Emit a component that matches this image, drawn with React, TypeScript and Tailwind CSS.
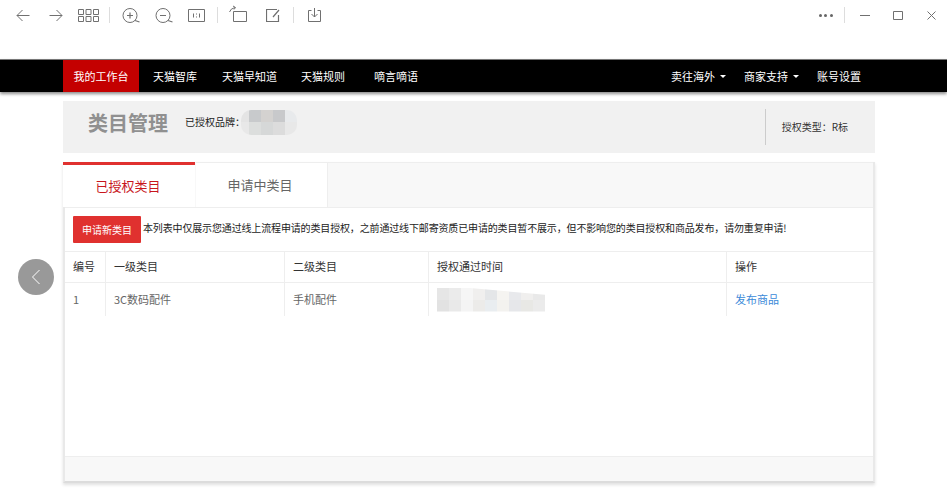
import React from 'react'

const font = "font-['Microsoft_YaHei','Noto_Sans_CJK_SC',sans-serif]"

// blurred-out values in the reference, drawn as mosaic tiles
const brandTop = ['w-[8px] bg-[#e4e4e4]', 'w-[12px] bg-[#c8cacc]', 'w-[12px] bg-[#d4d2d0]', 'w-[12px] bg-[#c8c9cb]', 'w-[12px] bg-[#e8eaec]']
const brandLow = ['w-[8px] bg-[#e8e8e8]', 'w-[12px] bg-[#dcdedd]', 'w-[12px] bg-[#d6d8d8]', 'w-[12px] bg-[#dcdcdc]', 'w-[12px] bg-[#e8e8e8]']
const timeTop = ['bg-[#e6e6e6]', 'bg-[#ebebeb]', 'bg-[#f6f6f6]', 'bg-[#f0efee]', 'bg-[#e4e6e8]', 'bg-[#f5f4f1]', 'bg-[#e8e9ec]', 'bg-[#f0efee]', 'bg-[#e9e9e9]']
const timeLow = ['bg-[#e2e2e2]', 'bg-[#e9e9e9]', 'bg-[#f4f4f4]', 'bg-[#ecebe9]', 'bg-[#e9edf0]', 'bg-[#f3f2ef]', 'bg-[#e6e7ea]', 'bg-[#e8e8e5]', 'bg-[#ebebeb]']

function Icon({ w, className, children }: { w: number; className?: string; children: React.ReactNode }) {
  return (
    <svg width={w} height={20} viewBox={`0 0 ${w} 20`} fill="none" stroke="#707070" strokeWidth="1" className={className}>
      {children}
    </svg>
  )
}

function Sep({ className }: { className: string }) {
  return <div className={`w-px h-4 bg-[#ddd] ${className}`} />
}

function Toolbar() {
  return (
    <div className="flex items-center h-[30px]">
      <Icon w={14} className="ml-[16px]"><path d="M13.500 10.500H1M6.500 5l-5.500 5.500 5.500 5.500" /></Icon>
      <Icon w={14} className="ml-[19px]"><path d="M0.500 10.500H13M7.500 5l5.500 5.500-5.500 5.500" /></Icon>
      <Icon w={21} className="ml-[15px]">
        <path d="M0.500 4.500h5v5h-5zM8 4.500h5v5H8zM15.500 4.500h5v5h-5zM0.500 11.500h5v5h-5zM8 11.500h5v5H8zM15.500 11.500h5v5h-5z" />
      </Icon>
      <Sep className="ml-[10px]" />
      <Icon w={18} className="ml-[12px]">
        <circle cx="8" cy="10.500" r="7" /><path d="M13 15.500l4.500 1.500M5 10.500h6M8 7.500v6" strokeWidth="1.200" />
      </Icon>
      <Icon w={18} className="ml-[15px]">
        <circle cx="8" cy="10.500" r="7" /><path d="M13 15.500l4.500 1.500M5 10.500h6" strokeWidth="1.200" />
      </Icon>
      <Icon w={17} className="ml-[15px]">
        <path d="M0.500 4.500h16v12h-16zM5.500 8.500v4M8.500 8.500v1M8.500 11.500v1M11.500 8.500v4" />
      </Icon>
      <Sep className="ml-[12px]" />
      <Icon w={19} className="ml-[11px]">
        <path d="M4.500 6.500h13v10h-13zM0.500 7Q1.500 3.500 6 2.500M4 1l2.500 1.500L5 4.500" />
      </Icon>
      <Icon w={14} className="ml-[18px]">
        <path d="M11 4.500H0.500v12h12V10M7 12l6-7" strokeWidth="1.200" />
      </Icon>
      <Sep className="ml-[13px]" />
      <Icon w={13} className="ml-[14px]">
        <path d="M3.500 5.500h-3v11h12v-11h-3M6.500 3v9M3.500 9l3 3 3-3" />
      </Icon>
      <div className="ml-auto flex items-center gap-[2.500px] mr-[11.500px]">
        <span className="w-[3px] h-[3px] rounded-full bg-[#666]" />
        <span className="w-[3px] h-[3px] rounded-full bg-[#666]" />
        <span className="w-[3px] h-[3px] rounded-full bg-[#666]" />
      </div>
      <Sep className="mr-[15px]" />
      <Icon w={10} className="mr-[23px]"><path d="M0 10.500h10" /></Icon>
      <Icon w={10} className="mr-[24px]"><path d="M0.500 6.500h9v8h-9z" /></Icon>
      <Icon w={9} className="mr-[11px]"><path d="M0.500 6.500l8 8M8.500 6.500l-8 8" /></Icon>
    </div>
  )
}

function Caret({ className }: { className: string }) {
  return <span className={`w-0 h-0 border-x-[3px] border-x-transparent border-t-[3px] border-t-white ${className}`} />
}

function Nav() {
  return (
    <div className="mt-[29px] h-[33px] bg-black border-t border-[#777] shadow-[0_2px_3px_rgba(0,0,0,0.45)] flex pl-[63px] text-[11px] text-white">
      <a className="w-[76px] bg-[#c40000] flex items-center justify-center">我的工作台</a>
      <a className="ml-[14px] flex items-center">天猫智库</a>
      <a className="ml-[25px] flex items-center">天猫早知道</a>
      <a className="ml-[24px] flex items-center">天猫规则</a>
      <a className="ml-[29px] flex items-center">嘀言嘀语</a>
      <a className="ml-auto flex items-center">卖往海外<Caret className="ml-[5px]" /></a>
      <a className="ml-[18px] flex items-center">商家支持<Caret className="ml-[5px]" /></a>
      <a className="ml-[18px] mr-[86px] flex items-center">账号设置</a>
    </div>
  )
}

function BrandPanel() {
  return (
    <div className="mt-[9px] h-[52px] bg-[#f1f1f1] flex items-start">
      <h2 className="ml-[25px] mt-[9px] text-[20px] leading-[26px] font-bold text-[#909090]">类目管理</h2>
      <span className="ml-[17px] mt-[14px] text-[10px] leading-[14px] text-[#222]">已授权品牌：</span>
      <div className="-ml-[4px] mt-[9px] h-[25px] rounded-[10px] overflow-hidden">
        <div className="flex h-[12px]">{brandTop.map((c, i) => <div key={i} className={c} />)}</div>
        <div className="flex h-[13px]">{brandLow.map((c, i) => <div key={i} className={c} />)}</div>
      </div>
      <div className="ml-auto mt-[8px] w-px h-[36px] bg-[#ccc]" />
      <span className="ml-[16px] mr-[27px] mt-[19px] text-[10px] leading-[14px] text-[#333]">授权类型：R标</span>
    </div>
  )
}

const cols = ['w-[41px]', 'w-[179px]', 'w-[144px]', 'w-[298px]', 'flex-1']

function Cell({ i, className, children }: { i: number; className?: string; children?: React.ReactNode }) {
  return (
    <div className={`${cols[i]} ${i < 4 ? 'border-r border-[#eee]' : ''} flex items-center pl-[8px] ${className ?? ''}`}>
      {children}
    </div>
  )
}

function Table() {
  return (
    <div className="text-[11px]">
      <div className="flex h-[32px] border-y border-[#eee] text-[#333]">
        {['编号', '一级类目', '二级类目', '授权通过时间', '操作'].map((t, i) => <Cell key={t} i={i} className="pb-[2px]">{t}</Cell>)}
      </div>
      <div className="flex h-[33px] text-[#666]">
        <Cell i={0}>1</Cell>
        <Cell i={1}>3C数码配件</Cell>
        <Cell i={2}>手机配件</Cell>
        <Cell i={3}>
          <div className="w-[108px] h-[24px] overflow-hidden [clip-path:polygon(0_0,25%_0,100%_30%,100%_100%,0_100%)]">
            <div className="flex h-[12px]">{timeTop.map((c, i) => <div key={i} className={`flex-1 ${c}`} />)}</div>
            <div className="flex h-[12px]">{timeLow.map((c, i) => <div key={i} className={`flex-1 ${c}`} />)}</div>
          </div>
        </Cell>
        <Cell i={4}><a className="text-[#3b8ad9]">发布商品</a></Cell>
      </div>
    </div>
  )
}

function CategoryPanel() {
  return (
    <div className="mt-[9px] h-[321px] border-x-2 border-b-2 border-x-[#e9e9e9] border-b-[#dcdcdc] bg-[#f8f8f8] shadow-[0_2px_3px_rgba(0,0,0,0.12)] flex flex-col">
      <div className="flex h-[45px] text-[13px]">
        <div className="-ml-[2px] w-[132px] pr-[2px] border-t-[3px] border-[#e0312f] bg-white text-[#c8161d] flex items-center justify-center">已授权类目</div>
        <div className="ml-px w-[132px] pr-[3px] border-t border-r border-[#eee] bg-white text-[#666] flex items-center justify-center">申请中类目</div>
        <div className="flex-1 border-t border-[#eee]" />
      </div>
      <div className="flex-1 bg-white border-t border-[#eee]">
        <div className="h-[43px] flex items-start text-[10px]">
          <button className="ml-[8px] mt-[8px] w-[68px] h-[27px] bg-[#e0312f] rounded-[1px] text-white">申请新类目</button>
          <p className="ml-[2px] mt-[13px] leading-[14px] tracking-[-0.15px] text-[#222] whitespace-nowrap">
            本列表中仅展示您通过线上流程申请的类目授权，之前通过线下邮寄资质已申请的类目暂不展示，但不影响您的类目授权和商品发布，请勿重复申请!
          </p>
        </div>
        <Table />
      </div>
      <div className="h-[25px] border-t border-[#eee] bg-[#f8f8f8]" />
    </div>
  )
}

export default function App() {
  return (
    <div className={`relative w-[947px] h-[489px] overflow-hidden bg-white ${font}`}>
      <Toolbar />
      <Nav />
      <div className="mr-[72px] ml-[63px]">
        <BrandPanel />
        <CategoryPanel />
      </div>
      <div className="absolute left-[18px] top-[259px] w-[36px] h-[36px] rounded-full bg-[#999] flex items-center justify-center">
        <svg width="10" height="16" viewBox="0 0 10 16" fill="none" stroke="#fff" strokeWidth="1">
          <path d="M8.500 1L1.500 8l7 7" />
        </svg>
      </div>
    </div>
  )
}
